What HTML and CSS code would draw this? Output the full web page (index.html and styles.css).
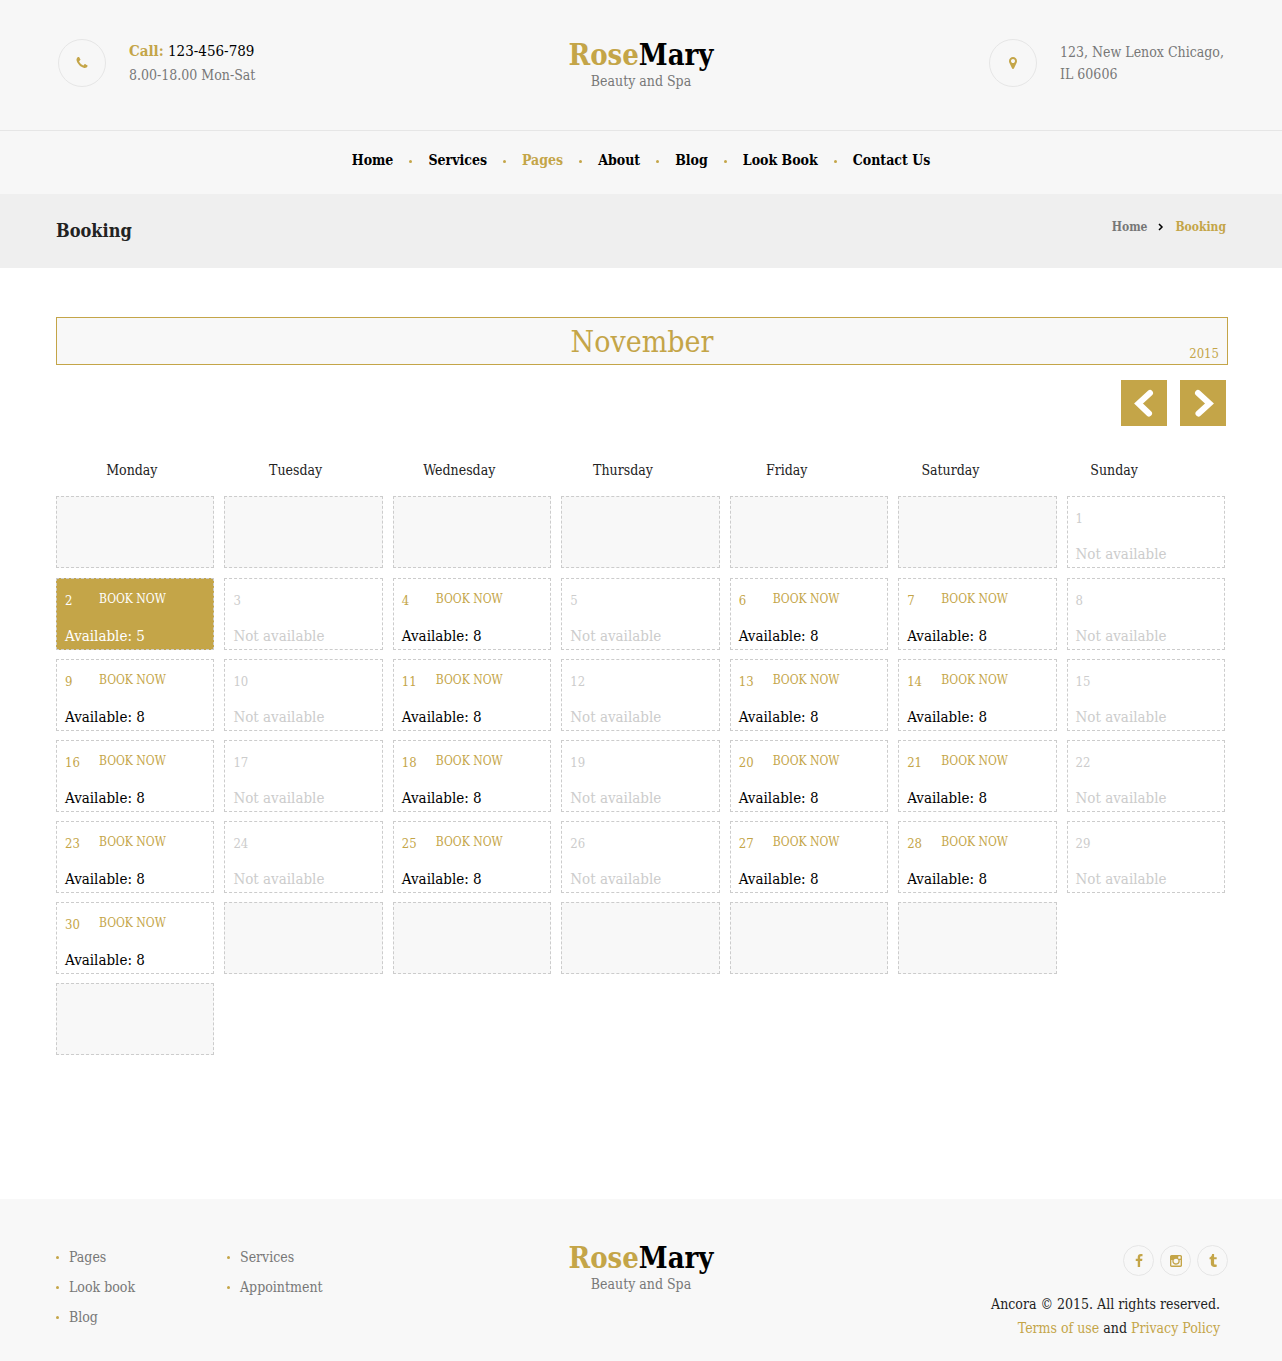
FILE: index.html
```html
<!DOCTYPE html>
<html lang="en">
<head>
<meta charset="utf-8">
<meta name="viewport" content="width=device-width, initial-scale=1">
<title>Booking - RoseMary Beauty and Spa</title>
<link rel="stylesheet" href="styles.css">
</head>
<body>
<header class="site-header">
  <div class="container top-bar">
    <div class="contact phone-block">
      <span class="ring"><svg class="icon" viewBox="0 0 1792 1792" aria-hidden="true"><path d="M1600 1240q0 27-10 70.500t-21 68.500q-21 50-122 106-94 51-186 51-27 0-53-3.500t-57.500-12.500-47-14.500-55.500-20.500-49-18q-98-35-175-83-127-79-264-216t-216-264q-48-77-83-175-3-9-18-49t-20.500-55.500-14.500-47-12.500-57.500-3.500-53q0-92 51-186 56-101 106-122 25-11 68.500-21t70.500-10q14 0 21 3 18 6 53 76 11 19 30 54t35 63.500 31 53.500q3 4 17.500 25t21.500 35.500 7 28.500q0 20-28.500 50t-62 55-62 53-28.500 46q0 9 5 22.500t8.500 20.500 14 24 11.500 19q76 137 174 235t235 174q2 1 19 11.500t24 14 20.500 8.500 22.500 5q18 0 46-28.500t53-62 55-62 50-28.500q14 0 28.500 7t35.500 21.500 25 17.500q25 15 53.500 31t63.500 35 54 30q70 35 76 53 3 7 3 21z"/></svg></span>
      <div class="contact-text">
        <p class="phone"><b>Call:</b> 123-456-789</p>
        <p>8.00-18.00 Mon-Sat</p>
      </div>
    </div>
    <a class="logo" href="#"><span class="logo-name"><span class="gold">Rose</span>Mary</span><span class="logo-tag">Beauty and Spa</span></a>
    <div class="contact address">
      <span class="ring"><svg class="icon" viewBox="0 0 1792 1792" aria-hidden="true"><path d="M1152 640q0-106-75-181t-181-75-181 75-75 181 75 181 181 75 181-75 75-181zm256 0q0 109-33 179l-364 774q-16 33-47.500 52t-67.500 19-67.500-19-46.500-52l-365-774q-33-70-33-179 0-212 150-362t362-150 362 150 150 362z"/></svg></span>
      <p class="address-text">123, New Lenox Chicago, IL 60606</p>
    </div>
  </div>
  <nav class="main-nav" aria-label="Main">
    <ul class="menu">
      <li><a href="#">Home</a></li>
      <li><a href="#">Services</a></li>
      <li><a class="gold" href="#">Pages</a></li>
      <li><a href="#">About</a></li>
      <li><a href="#">Blog</a></li>
      <li><a href="#">Look Book</a></li>
      <li><a href="#">Contact Us</a></li>
    </ul>
  </nav>
</header>

<div class="title-band">
  <div class="container title-row">
    <h1>Booking</h1>
    <nav class="crumbs" aria-label="Breadcrumb">
      <a href="#">Home</a>
      <svg class="crumb-arrow" viewBox="0 0 6 8" aria-hidden="true"><path d="M1 1l3 3-3 3"/></svg>
      <span class="gold">Booking</span>
    </nav>
  </div>
</div>

<main class="container booking">
  <div class="month">
    <h2>November</h2>
    <span class="year">2015</span>
  </div>
  <div class="pager">
    <button type="button" aria-label="Previous month"><svg viewBox="0 0 46 46" aria-hidden="true"><path d="M29 13L17.500 23.500L28 33.500"/></svg></button>
    <button type="button" aria-label="Next month"><svg viewBox="0 0 46 46" aria-hidden="true"><path d="M18 13L29.500 23.500L18.500 33.500"/></svg></button>
  </div>
  <table class="calendar">
    <thead>
      <tr><th>Monday</th><th>Tuesday</th><th>Wednesday</th><th>Thursday</th><th>Friday</th><th>Saturday</th><th>Sunday</th></tr>
    </thead>
    <tbody>
      <tr>
        <td class="empty"></td><td class="empty"></td><td class="empty"></td><td class="empty"></td><td class="empty"></td><td class="empty"></td>
        <td class="closed"><span class="day">1</span><span class="status">Not available</span></td>
      </tr>
      <tr>
        <td class="open today"><span class="day">2</span><a href="#">BOOK NOW</a><span class="status">Available: 5</span></td>
        <td class="closed"><span class="day">3</span><span class="status">Not available</span></td>
        <td class="open"><span class="day">4</span><a href="#">BOOK NOW</a><span class="status">Available: 8</span></td>
        <td class="closed"><span class="day">5</span><span class="status">Not available</span></td>
        <td class="open"><span class="day">6</span><a href="#">BOOK NOW</a><span class="status">Available: 8</span></td>
        <td class="open"><span class="day">7</span><a href="#">BOOK NOW</a><span class="status">Available: 8</span></td>
        <td class="closed"><span class="day">8</span><span class="status">Not available</span></td>
      </tr>
      <tr>
        <td class="open"><span class="day">9</span><a href="#">BOOK NOW</a><span class="status">Available: 8</span></td>
        <td class="closed"><span class="day">10</span><span class="status">Not available</span></td>
        <td class="open"><span class="day">11</span><a href="#">BOOK NOW</a><span class="status">Available: 8</span></td>
        <td class="closed"><span class="day">12</span><span class="status">Not available</span></td>
        <td class="open"><span class="day">13</span><a href="#">BOOK NOW</a><span class="status">Available: 8</span></td>
        <td class="open"><span class="day">14</span><a href="#">BOOK NOW</a><span class="status">Available: 8</span></td>
        <td class="closed"><span class="day">15</span><span class="status">Not available</span></td>
      </tr>
      <tr>
        <td class="open"><span class="day">16</span><a href="#">BOOK NOW</a><span class="status">Available: 8</span></td>
        <td class="closed"><span class="day">17</span><span class="status">Not available</span></td>
        <td class="open"><span class="day">18</span><a href="#">BOOK NOW</a><span class="status">Available: 8</span></td>
        <td class="closed"><span class="day">19</span><span class="status">Not available</span></td>
        <td class="open"><span class="day">20</span><a href="#">BOOK NOW</a><span class="status">Available: 8</span></td>
        <td class="open"><span class="day">21</span><a href="#">BOOK NOW</a><span class="status">Available: 8</span></td>
        <td class="closed"><span class="day">22</span><span class="status">Not available</span></td>
      </tr>
      <tr>
        <td class="open"><span class="day">23</span><a href="#">BOOK NOW</a><span class="status">Available: 8</span></td>
        <td class="closed"><span class="day">24</span><span class="status">Not available</span></td>
        <td class="open"><span class="day">25</span><a href="#">BOOK NOW</a><span class="status">Available: 8</span></td>
        <td class="closed"><span class="day">26</span><span class="status">Not available</span></td>
        <td class="open"><span class="day">27</span><a href="#">BOOK NOW</a><span class="status">Available: 8</span></td>
        <td class="open"><span class="day">28</span><a href="#">BOOK NOW</a><span class="status">Available: 8</span></td>
        <td class="closed"><span class="day">29</span><span class="status">Not available</span></td>
      </tr>
      <tr>
        <td class="open"><span class="day">30</span><a href="#">BOOK NOW</a><span class="status">Available: 8</span></td>
        <td class="empty"></td><td class="empty"></td><td class="empty"></td><td class="empty"></td><td class="empty"></td>
      </tr>
      <tr>
        <td class="empty"></td>
      </tr>
    </tbody>
  </table>
</main>

<footer class="site-footer">
  <div class="container footer-row">
    <div class="footer-links">
      <ul>
        <li><a href="#">Pages</a></li>
        <li><a href="#">Look book</a></li>
        <li><a href="#">Blog</a></li>
      </ul>
      <ul>
        <li><a href="#">Services</a></li>
        <li><a href="#">Appointment</a></li>
      </ul>
    </div>
    <a class="logo" href="#"><span class="logo-name"><span class="gold">Rose</span>Mary</span><span class="logo-tag">Beauty and Spa</span></a>
    <div class="footer-info">
      <div class="social">
        <a class="ring small" href="#" aria-label="Facebook"><svg class="icon" viewBox="0 0 1792 1792" aria-hidden="true"><path d="M1343 12v264h-157q-86 0-116 36t-30 108v189h293l-39 296h-254v759h-306v-759h-255v-296h255v-218q0-186 104-288.500t277-102.500q147 0 228 12z"/></svg></a>
        <a class="ring small" href="#" aria-label="Instagram"><svg class="icon" viewBox="0 0 1792 1792" aria-hidden="true"><path d="M1490 1426v-648h-135q20 63 20 131 0 126-64 232.500t-174 168.500-240 62q-197 0-337-135.500t-140-327.500q0-68 20-131h-141v648q0 26 17.500 43.500t43.500 17.500h1069q25 0 43-17.500t18-43.500zm-284-533q0-124-90.500-211.500t-218.500-87.500q-127 0-217.500 87.500t-90.500 211.500 90.500 211.500 217.500 87.500q128 0 218.500-87.500t90.500-211.500zm284-360v-165q0-28-20-48.500t-49-20.500h-174q-29 0-49 20.500t-20 48.500v165q0 29 20 49t49 20h174q29 0 49-20t20-49zm174-208v1142q0 81-58 139t-139 58h-1142q-81 0-139-58t-58-139v-1142q0-81 58-139t139-58h1142q81 0 139 58t58 139z"/></svg></a>
        <a class="ring small" href="#" aria-label="Tumblr"><svg class="icon" viewBox="0 0 1792 1792" aria-hidden="true"><path d="M1328 1329l80 237q-23 35-111 66t-177 32q-104 2-190.500-26t-142.500-74-95-106-55.500-120-16.500-118v-544h-168v-215q72-26 129-69.500t91-90 58-102 34-99 15-88.500q1-5 4.500-8.500t7.500-3.500h244v424h333v252h-334v518q0 30 6.500 56t22.500 52.500 49.500 41.500 81.500 14q78-2 134-29z"/></svg></a>
      </div>
      <p class="legal">Ancora © 2015. All rights reserved.<br><a href="#">Terms of use</a> and <a href="#">Privacy Policy</a></p>
    </div>
  </div>
</footer>
</body>
</html>
```
FILE: styles.css
```css
:root {
  --gold: #c4a548;
  --ink: #000;
  --text: #222;
  --muted: #777;
  --pale: #ccc;
  --panel: #f7f7f7;
  --line: #e6e6e6;
}

* {
  box-sizing: border-box;
}

body {
  margin: 0;
  min-height: 100vh;
  display: flex;
  flex-direction: column;
  background: #fff;
  color: var(--muted);
  font-family: "DejaVu Serif Condensed", "DejaVu Serif", serif;
  font-size: 14px;
  line-height: 24px;
}

p,
h1,
h2,
ul {
  margin: 0;
  padding: 0;
}

ul {
  list-style: none;
}

a {
  color: inherit;
  text-decoration: none;
}

.gold {
  color: var(--gold);
}

.container {
  width: calc(100% - 32px);
  max-width: 1170px;
  margin: 0 auto;
}

/* Header */
.site-header {
  background: var(--panel);
}

.top-bar {
  display: grid;
  grid-template-columns: 1fr auto 1fr;
  align-items: start;
  padding: 39px 0;
}

.contact {
  display: flex;
  gap: 23px;
}

.phone-block {
  padding-left: 2px;
}

.ring {
  display: flex;
  flex: none;
  align-items: center;
  justify-content: center;
  width: 48px;
  height: 48px;
  border: 1px solid var(--line);
  border-radius: 50%;
}

.icon {
  width: 14px;
  height: 14px;
  fill: var(--gold);
}

.phone {
  color: var(--ink);
  font-size: 15px;
}

.phone b {
  color: var(--gold);
}

.address {
  justify-self: end;
}

.address-text {
  width: 166px;
  padding-top: 2px;
  line-height: 22px;
}

.logo {
  display: flex;
  flex-direction: column;
  align-items: center;
}

.logo-name {
  color: var(--ink);
  font-size: 29px;
  font-weight: 700;
  line-height: 32px;
}

.logo-tag {
  line-height: 20px;
}

.main-nav {
  border-top: 1px solid var(--line);
  padding: 17px 0 22px;
}

.menu {
  display: flex;
  flex-wrap: wrap;
  justify-content: center;
  color: var(--ink);
  font-weight: 700;
}

.menu li {
  display: flex;
  align-items: center;
}

.menu li + li::before {
  content: "";
  width: 3px;
  height: 3px;
  margin: 2px 16px 0;
  border-radius: 50%;
  background: var(--gold);
}

/* Page title */
.title-band {
  background: #efefef;
}

.title-row {
  display: flex;
  justify-content: space-between;
  padding: 21px 0;
}

.title-row h1 {
  color: var(--text);
  font-size: 18px;
  line-height: 32px;
}

.crumbs {
  display: flex;
  align-items: center;
  gap: 11px;
  height: 24px;
  font-size: 12px;
  font-weight: 700;
}

.crumb-arrow {
  width: 6px;
  height: 8px;
  fill: none;
  stroke: var(--ink);
  stroke-width: 1.5;
}

/* Calendar */
.booking {
  padding: 49px 0 135px;
}

.month {
  display: grid;
  grid-template-columns: 1fr auto 1fr;
  height: 48px;
  margin-right: -2px;
  padding: 0 8px;
  border: 1px solid var(--gold);
  background: #f8f8f8;
  color: var(--gold);
}

.month h2 {
  grid-column: 2;
  font-size: 30px;
  font-weight: 400;
  line-height: 48px;
}

.year {
  align-self: end;
  justify-self: end;
  font-size: 13px;
}

.pager {
  display: flex;
  justify-content: flex-end;
  gap: 13px;
  margin-top: 15px;
}

.pager button {
  width: 46px;
  height: 46px;
  padding: 0;
  border: 0;
  background: var(--gold);
  cursor: pointer;
}

.pager svg {
  display: block;
  fill: none;
  stroke: #fff;
  stroke-width: 6;
  stroke-linecap: round;
}

.calendar,
.calendar thead,
.calendar tbody {
  display: block;
}

.calendar tr {
  display: grid;
  grid-template-columns: repeat(7, 1fr);
}

.calendar thead tr {
  margin: 32px 30px 14px -6px;
}

.calendar th {
  padding: 0;
  color: var(--text);
  font-weight: 400;
}

.calendar tbody tr {
  column-gap: 10px;
  margin: 0 1px 9px 0;
}

.calendar tbody tr:first-child {
  margin-bottom: 10px;
}

.calendar td {
  display: grid;
  grid-template-columns: 34px 1fr;
  grid-template-rows: 36px 24px;
  height: 72px;
  padding: 9px 8px 0;
  border: 1px dashed var(--pale);
  color: var(--pale);
}

.calendar .empty {
  background: #f8f8f8;
}

.calendar .status {
  grid-column: 1 / 3;
  font-size: 15px;
}

.calendar .day {
  padding-top: 1px;
  font-size: 13px;
}

.calendar .open {
  color: var(--gold);
}

.calendar .open a {
  font-size: 12px;
  line-height: 22px;
}

.calendar .open .status {
  color: var(--ink);
}

.calendar .today {
  background: var(--gold);
}

.calendar .today,
.calendar .today .status {
  color: #fff;
}

/* Footer */
.site-footer {
  flex: 1;
  background: #f8f8f8;
}

.footer-row {
  display: grid;
  grid-template-columns: 1fr auto 1fr;
  padding: 43px 0 18px;
}

.footer-links {
  display: grid;
  grid-template-columns: 171px 1fr;
  line-height: 30px;
}

.footer-links li {
  display: flex;
  align-items: center;
  gap: 10px;
}

.footer-links li::before {
  content: "";
  width: 3px;
  height: 3px;
  border-radius: 50%;
  background: var(--gold);
}

.footer-info {
  padding-top: 3px;
}

.social {
  display: flex;
  justify-content: flex-end;
  gap: 6px;
  margin-right: -2px;
}

.ring.small {
  width: 31px;
  height: 31px;
}

.legal {
  margin-top: 16px;
  padding-right: 6px;
  color: var(--text);
  text-align: right;
}

.legal a {
  color: var(--gold);
}
```
